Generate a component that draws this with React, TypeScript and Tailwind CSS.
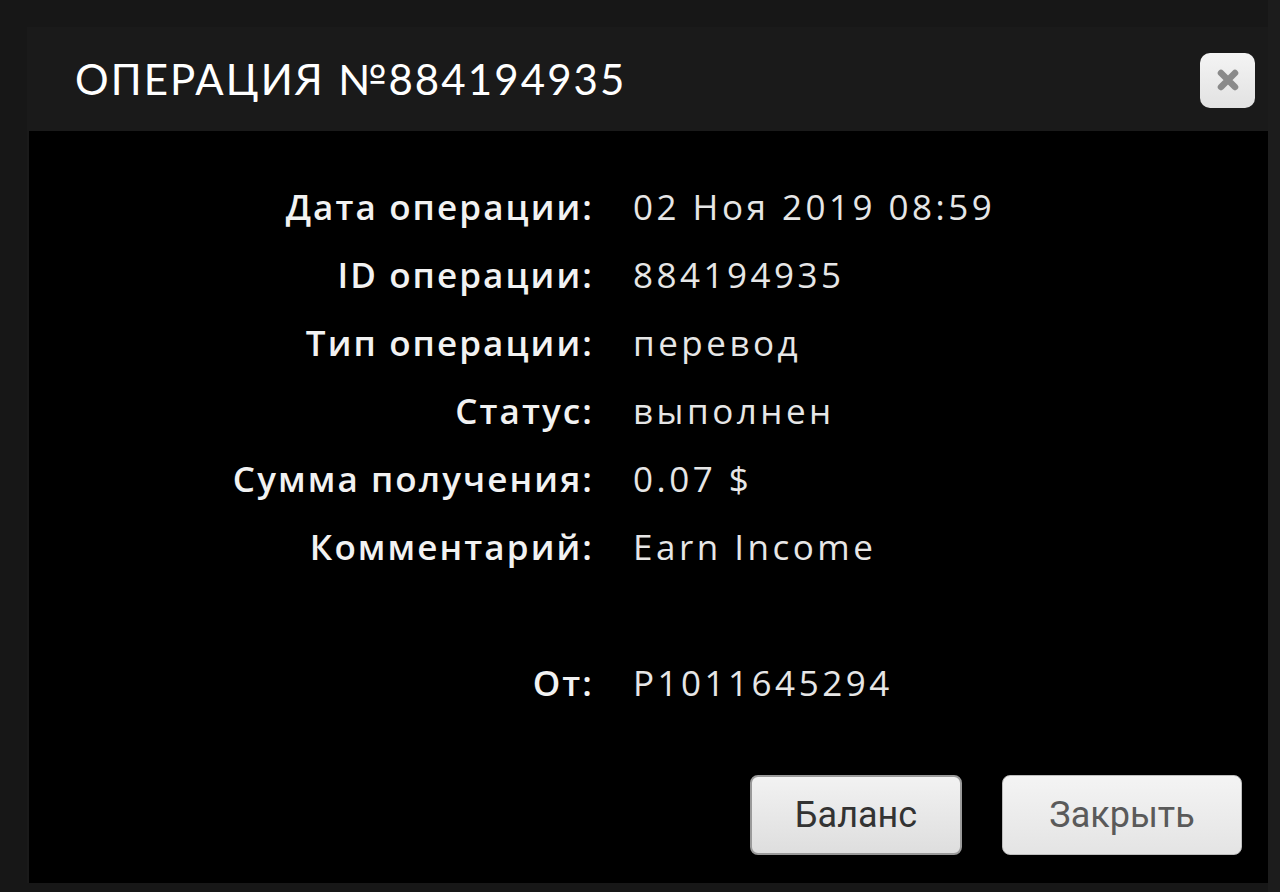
import React from "react";

const rows: [string, string][] = [
  ["Дата операции:", "02 Ноя 2019 08:59"],
  ["ID операции:", "884194935"],
  ["Тип операции:", "перевод"],
  ["Статус:", "выполнен"],
  ["Сумма получения:", "0.07 $"],
  ["Комментарий:", "Earn Income"],
  ["", ""],
  ["От:", "P1011645294"],
];

export default function App() {
  return (
    <div className="w-[1280px] h-[892px] bg-[#171717] flex overflow-hidden" style={{ fontFamily: '"Open Sans", sans-serif' }}>
      {/* Modal */}
      <div className="ml-[27px] mt-[27px] w-[1241px] h-[856px] bg-[#1a1a1a] flex flex-col">
        {/* Header */}
        <div className="h-[104px] flex items-center justify-between pl-[48px] pr-[13px]">
          <h1
            className="text-[42px] text-white tracking-[0.05em] leading-none"
            style={{ fontFamily: '"Lato", sans-serif' }}
          >
            ОПЕРАЦИЯ №884194935
          </h1>
          <button className="w-[55px] h-[55px] rounded-[10px] bg-gradient-to-b from-[#f4f4f4] to-[#e2e2e2] flex items-center justify-center mt-[2px]">
            <svg width="26" height="26" viewBox="0 0 26 26">
              <path d="M6 6 L20 20 M20 6 L6 20" stroke="#8a8a8a" strokeWidth="6.5" strokeLinecap="round" />
            </svg>
          </button>
        </div>

        {/* Body */}
        <div className="flex-1 ml-[2px] bg-black flex flex-col">
          <div className="pt-[42px] grid grid-cols-[565px_1fr] gap-x-[39px]">
            {rows.map(([label, value], i) => (
              <React.Fragment key={i}>
                <div className="h-[68px] leading-[68px] text-right text-[35px] font-semibold text-[#f2f2f2] tracking-[0.06em]">
                  {label}
                </div>
                <div className="h-[68px] leading-[68px] text-[35px] text-[#e6e6e6] tracking-[0.1em]">{value}</div>
              </React.Fragment>
            ))}
          </div>

          <div className="mt-auto pb-[28px] pr-[26px] flex justify-end gap-[40px]" style={{ fontFamily: "Roboto, sans-serif" }}>
            <button className="w-[212px] h-[80px] rounded-[8px] border-2 border-[#9a9a9a] bg-gradient-to-b from-[#f2f2f2] to-[#dedede] text-[36px] text-[#333]">
              Баланс
            </button>
            <button className="w-[240px] h-[80px] rounded-[8px] border border-[#bdbdbd] bg-gradient-to-b from-[#f4f4f4] to-[#e4e4e4] text-[36px] text-[#5a5a5a]">
              Закрыть
            </button>
          </div>
        </div>
      </div>
      <div className="w-[12px] h-full bg-[#1c1c1c]" />
    </div>
  );
}
